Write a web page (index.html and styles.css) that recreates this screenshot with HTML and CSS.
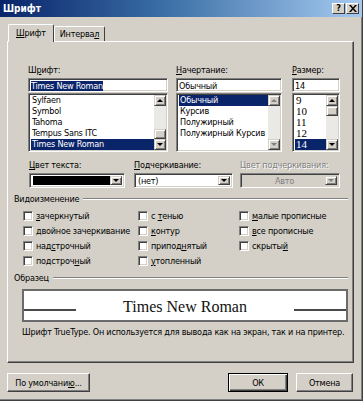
FILE: index.html
```html
<!DOCTYPE html>
<html>
<head>
  <title>Шрифт</title>
  <link rel="stylesheet" href="styles.css">
</head>
<body>
  <div class="window">
    <div class="titlebar">
      <span class="title">Шрифт</span>
      <div class="caption-btns">
        <span class="cbtn">?</span>
        <span class="cbtn">
          <svg width="8" height="7" viewBox="0 0 8 7"><path d="M0 0h2l2 2.5L6 0h2L5 3.5 8 7H6L4 4.5 2 7H0l3-3.5z" fill="#000"/></svg>
        </span>
      </div>
    </div>

    <div class="tabs">
      <div class="tab active"><u>Ш</u>рифт</div>
      <div class="tab">Интерва<u>л</u></div>
    </div>

    <div class="panel">
      <!-- font / style / size -->
      <div class="font-row">
        <div class="field f-name">
          <div class="lbl">Ш<u>р</u>ифт:</div>
          <div class="edit"><span class="hilite">Times New Roman</span></div>
          <div class="listbox">
            <div class="items">
              <div class="item">Sylfaen</div>
              <div class="item">Symbol</div>
              <div class="item">Tahoma</div>
              <div class="item">Tempus Sans ITC</div>
              <div class="item selected">Times New Roman</div>
            </div>
            <div class="scrollbar">
              <div class="sb-btn"><span class="arrow up"></span></div>
              <div class="track"><div class="thumb bottom"></div></div>
              <div class="sb-btn"><span class="arrow down"></span></div>
            </div>
          </div>
        </div>

        <div class="field f-style">
          <div class="lbl"><u>Н</u>ачертание:</div>
          <div class="edit">Обычный</div>
          <div class="listbox">
            <div class="items">
              <div class="item selected">Обычный</div>
              <div class="item">Курсив</div>
              <div class="item">Полужирный</div>
              <div class="item">Полужирный Курсив</div>
            </div>
            <div class="scrollbar">
              <div class="sb-btn"><span class="arrow up off"></span></div>
              <div class="track"></div>
              <div class="sb-btn"><span class="arrow down off"></span></div>
            </div>
          </div>
        </div>

        <div class="field f-size">
          <div class="lbl"><u>Р</u>азмер:</div>
          <div class="edit">14</div>
          <div class="listbox">
            <div class="items serif">
              <div class="item">9</div>
              <div class="item">10</div>
              <div class="item">11</div>
              <div class="item">12</div>
              <div class="item selected">14</div>
            </div>
            <div class="scrollbar">
              <div class="sb-btn"><span class="arrow up"></span></div>
              <div class="track"><div class="thumb"></div></div>
              <div class="sb-btn"><span class="arrow down"></span></div>
            </div>
          </div>
        </div>
      </div>

      <!-- colour / underline -->
      <div class="combo-row">
        <div class="field c-color">
          <div class="lbl"><u>Ц</u>вет текста:</div>
          <div class="combo">
            <div class="combo-val"><span class="swatch"></span></div>
            <div class="dd-btn"><span class="arrow down"></span></div>
          </div>
        </div>
        <div class="field c-under">
          <div class="lbl"><u>П</u>одчеркивание:</div>
          <div class="combo">
            <div class="combo-val">(нет)</div>
            <div class="dd-btn"><span class="arrow down"></span></div>
          </div>
        </div>
        <div class="field c-ucolor">
          <div class="lbl disabled">Цвет подчеркивания:</div>
          <div class="combo disabled">
            <div class="combo-val">Авто</div>
            <div class="dd-btn"><span class="arrow down off"></span></div>
          </div>
        </div>
      </div>

      <div class="legend effects-legend"><span>Видоизменение</span><span class="etch"></span></div>

      <div class="checks">
        <div class="check"><span class="box"></span><span><u>з</u>ачеркнутый</span></div>
        <div class="check"><span class="box"></span><span><u>д</u>войное зачеркивание</span></div>
        <div class="check"><span class="box"></span><span>над<u>с</u>трочный</span></div>
        <div class="check"><span class="box"></span><span>подстроч<u>н</u>ый</span></div>
        <div class="check"><span class="box"></span><span>с <u>т</u>енью</span></div>
        <div class="check"><span class="box"></span><span><u>к</u>онтур</span></div>
        <div class="check"><span class="box"></span><span>припод<u>н</u>ятый</span></div>
        <div class="check"><span class="box"></span><span><u>у</u>топленный</span></div>
        <div class="check"><span class="box"></span><span><u>м</u>алые прописные</span></div>
        <div class="check"><span class="box"></span><span><u>в</u>се прописные</span></div>
        <div class="check"><span class="box"></span><span>скрыты<u>й</u></span></div>
      </div>

      <div class="legend sample-legend"><span>Образец</span><span class="etch"></span></div>

      <div class="preview">
        <span class="rule"></span>
        <span class="sample">Times New Roman</span>
        <span class="rule"></span>
      </div>

      <div class="desc">Шрифт TrueType. Он используется для вывода как на экран, так и на принтер.</div>
    </div>

    <div class="buttons">
      <div class="btn btn-def">По умолчани<u>ю</u>...</div>
      <div class="spacer"></div>
      <div class="btn btn-ok">ОК</div>
      <div class="btn btn-cancel">Отмена</div>
    </div>
  </div>
</body>
</html>
```

FILE: styles.css
```css
body {
  margin: 0;
  padding: 0;
  font-family: "DejaVu Sans Condensed", "DejaVu Sans", sans-serif;
  font-stretch: condensed;
  font-size: 9px;
  letter-spacing: -0.2px;
  color: #000;
  background: #d4d0c8;
  overflow: hidden;
}

u {
  text-decoration: underline;
  text-underline-offset: 1px;
}

.window {
  width: 363px;
  height: 401px;
  box-sizing: border-box;
  background: #d4d0c8;
  border-right: 1px solid #404040;
  border-bottom: 1px solid #404040;
  box-shadow: inset -1px -1px #808080;
  overflow: hidden;
}

/* title bar */
.titlebar {
  height: 17px;
  display: flex;
  align-items: center;
  justify-content: space-between;
  padding: 0 3px;
  background: linear-gradient(to right, #0a246a, #3a6ea5 45%, #a6caf0);
}

.title {
  color: #fff;
  font-weight: bold;
  font-size: 10px;
  letter-spacing: 0;
}

.caption-btns {
  display: flex;
  gap: 1px;
}

.cbtn {
  width: 13px;
  height: 11px;
  box-sizing: border-box;
  display: flex;
  align-items: center;
  justify-content: center;
  background: #d4d0c8;
  border: 1px solid;
  border-color: #fff #404040 #404040 #fff;
  font-weight: bold;
  font-size: 9px;
  line-height: 9px;
}

/* tabs */
.tabs {
  display: flex;
  align-items: flex-end;
  height: 17px;
  margin-top: 7px;
  padding-left: 8px;
}

.tab {
  height: 15px;
  line-height: 14px;
  padding: 0 5px;
  box-sizing: border-box;
  border: 1px solid;
  border-bottom: none;
  border-color: #fff #404040 #fff #fff;
  border-radius: 2px 2px 0 0;
}

.tab.active {
  height: 18px;
  line-height: 17px;
  padding: 0 7px;
  margin-bottom: -1px;
  position: relative;
  z-index: 1;
  background: #d4d0c8;
}

/* main page */
.panel {
  margin-left: 7px;
  width: 347px;
  height: 322px;
  box-sizing: border-box;
  border: 1px solid;
  border-color: #fff #404040 #404040 #fff;
  box-shadow: inset -1px -1px #808080;
}

.lbl {
  height: 12px;
  line-height: 12px;
  white-space: nowrap;
}

.lbl.disabled {
  color: #808080;
  text-shadow: 1px 1px #fff;
}

.font-row {
  display: flex;
  margin: 22px 0 0 20px;
}

.f-name { width: 140px; }
.f-style { width: 106px; margin-left: 8px; }
.f-size { width: 48px; margin-left: 10px; }

.edit,
.listbox,
.combo {
  box-sizing: border-box;
  background: #fff;
  border: 1px solid;
  border-color: #808080 #fff #fff #808080;
  box-shadow: inset 1px 1px #404040, inset -1px -1px #d4d0c8;
}

.edit {
  margin-top: 2px;
  height: 14px;
  line-height: 10px;
  padding: 2px 2px 0;
  white-space: nowrap;
  overflow: hidden;
}

.hilite {
  background: #0a246a;
  color: #fff;
}

.listbox {
  margin-top: 1px;
  height: 59px;
  padding: 1px;
  display: flex;
}

.items {
  flex: 1;
  overflow: hidden;
  padding-left: 1px;
}

.item {
  height: 11px;
  line-height: 11px;
  padding-left: 1px;
  white-space: nowrap;
}

.item.selected {
  background: #0a246a;
  color: #fff;
}

.serif {
  font-family: "Liberation Serif", "Times New Roman", serif;
  font-stretch: normal;
  font-size: 11px;
  letter-spacing: 0;
}

.scrollbar {
  width: 12px;
  display: flex;
  flex-direction: column;
}

.sb-btn,
.thumb,
.dd-btn {
  box-sizing: border-box;
  background: #d4d0c8;
  border: 1px solid;
  border-color: #d4d0c8 #404040 #404040 #d4d0c8;
  box-shadow: inset 1px 1px #fff, inset -1px -1px #808080;
}

.sb-btn {
  height: 11px;
  display: flex;
  align-items: center;
  justify-content: center;
}

.track {
  flex: 1;
  display: flex;
  flex-direction: column;
  background: #ebe9e5;
}

.thumb {
  height: 10px;
}

.thumb.bottom {
  margin-top: auto;
}

.arrow {
  width: 0;
  height: 0;
  border-left: 3px solid transparent;
  border-right: 3px solid transparent;
}

.arrow.up { border-bottom: 3px solid #000; }
.arrow.down { border-top: 3px solid #000; }
.arrow.up.off { border-bottom-color: #808080; }
.arrow.down.off { border-top-color: #808080; }

/* combos */
.combo-row {
  display: flex;
  margin: 7px 0 0 21px;
}

.c-color { width: 96px; }
.c-under { width: 99px; margin-left: 9px; }
.c-ucolor { width: 100px; margin-left: 7px; }

.combo {
  margin-top: 2px;
  height: 15px;
  padding: 2px;
  display: flex;
}

.combo-val {
  flex: 1;
  line-height: 11px;
  padding-left: 1px;
  white-space: nowrap;
  display: flex;
}

.swatch {
  flex: 1;
  background: #000;
}

.dd-btn {
  width: 12px;
  display: flex;
  align-items: center;
  justify-content: center;
}

.combo.disabled {
  background: #d4d0c8;
}

.combo.disabled .combo-val {
  justify-content: center;
  color: #808080;
}

/* group captions */
.legend {
  display: flex;
  align-items: center;
  height: 12px;
  line-height: 12px;
  margin-left: 6px;
  margin-right: 5px;
}

.etch {
  flex: 1;
  height: 1px;
  margin-left: 4px;
  background: #808080;
  border-bottom: 1px solid #fff;
}

.effects-legend { margin-top: 5px; }
.sample-legend { margin-top: 4px; }

/* checkboxes */
.checks {
  display: grid;
  grid-template-columns: 115px 101px auto;
  grid-template-rows: repeat(4, 15px);
  grid-auto-flow: column;
  margin: 3px 0 0 15px;
}

.check {
  display: flex;
  align-items: center;
  gap: 3px;
  white-space: nowrap;
}

.box {
  width: 10px;
  height: 10px;
  box-sizing: border-box;
  background: #fff;
  border: 1px solid;
  border-color: #808080 #fff #fff #808080;
  box-shadow: inset 1px 1px #404040, inset -1px -1px #d4d0c8;
}

/* preview */
.preview {
  margin: 5px 0 0 14px;
  width: 326px;
  height: 33px;
  box-sizing: border-box;
  border: 2px solid #6b6b6b;
  background: #fff;
  display: flex;
  align-items: flex-end;
  padding-bottom: 9px;
}

.rule {
  width: 52px;
  height: 2px;
  background: #4a4a4a;
}

.sample {
  flex: 1;
  text-align: center;
  font-family: "Liberation Serif", "Times New Roman", serif;
  font-stretch: normal;
  font-size: 16px;
  line-height: 16px;
  letter-spacing: 0;
  margin-bottom: -4px;
  color: #111;
}

.desc {
  margin: 4px 0 0 14px;
  height: 12px;
  line-height: 12px;
  white-space: nowrap;
}

/* dialog buttons */
.buttons {
  display: flex;
  margin-top: 10px;
  padding-left: 7px;
}

.spacer {
  flex: 1;
}

.btn {
  height: 19px;
  box-sizing: border-box;
  display: flex;
  align-items: center;
  justify-content: center;
  background: #d4d0c8;
  border: 1px solid;
  border-color: #fff #404040 #404040 #fff;
  box-shadow: inset -1px -1px #808080;
}

.btn-def { width: 83px; }
.btn-ok {
  width: 60px;
  border: 1px solid #000;
  box-shadow: inset 1px 1px #fff, inset -1px -1px #404040, inset -2px -2px #808080;
}
.btn-cancel { width: 57px; margin-left: 8px; margin-right: 9px; }
```
